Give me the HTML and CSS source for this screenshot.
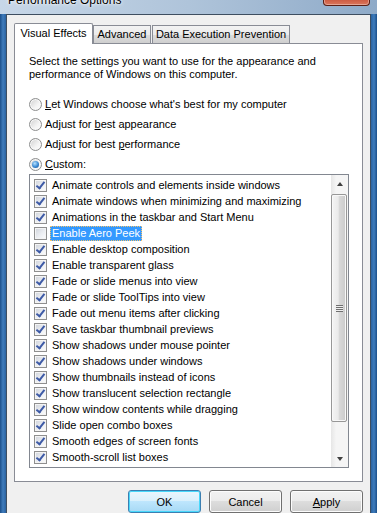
FILE: index.html
```html
<!DOCTYPE html>
<html lang="en">

<head>
  <meta charset="UTF-8">
  <title>Performance Options</title>
  <link rel="stylesheet" href="styles.css">
</head>

<body>
  <div class="window">
    <div class="titlebar">
      <span class="title">Performance Options</span>
      <span class="close">
        <svg width="12" height="6" viewBox="0 0 12 6">
          <path d="M2 -4 L6 0 L10 -4 M2 4 L6 0 L10 4" stroke="#fff" stroke-width="2.2" fill="none" />
        </svg>
      </span>
    </div>

    <div class="client">
      <div class="tabs">
        <div class="tab active">Visual Effects</div>
        <div class="tab adv">Advanced</div>
        <div class="tab dep">Data Execution Prevention</div>
      </div>

      <div class="panel">
        <p class="desc">Select the settings you want to use for the appearance and<br>performance of Windows on this computer.</p>

        <div class="radios">
          <div class="opt"><span class="radio"></span><span><u>L</u>et Windows choose what's best for my computer</span></div>
          <div class="opt"><span class="radio"></span><span>Adjust for <u>b</u>est appearance</span></div>
          <div class="opt"><span class="radio"></span><span>Adjust for best <u>p</u>erformance</span></div>
          <div class="opt"><span class="radio on"></span><span><u>C</u>ustom:</span></div>
        </div>

        <div class="listbox">
          <ul class="items">
            <li><span class="cb on"></span><span class="lbl">Animate controls and elements inside windows</span></li>
            <li><span class="cb on"></span><span class="lbl">Animate windows when minimizing and maximizing</span></li>
            <li><span class="cb on"></span><span class="lbl">Animations in the taskbar and Start Menu</span></li>
            <li><span class="cb"></span><span class="lbl selected">Enable Aero Peek</span></li>
            <li><span class="cb on"></span><span class="lbl">Enable desktop composition</span></li>
            <li><span class="cb on"></span><span class="lbl">Enable transparent glass</span></li>
            <li><span class="cb on"></span><span class="lbl">Fade or slide menus into view</span></li>
            <li><span class="cb on"></span><span class="lbl">Fade or slide ToolTips into view</span></li>
            <li><span class="cb on"></span><span class="lbl">Fade out menu items after clicking</span></li>
            <li><span class="cb on"></span><span class="lbl">Save taskbar thumbnail previews</span></li>
            <li><span class="cb on"></span><span class="lbl">Show shadows under mouse pointer</span></li>
            <li><span class="cb on"></span><span class="lbl">Show shadows under windows</span></li>
            <li><span class="cb on"></span><span class="lbl">Show thumbnails instead of icons</span></li>
            <li><span class="cb on"></span><span class="lbl">Show translucent selection rectangle</span></li>
            <li><span class="cb on"></span><span class="lbl">Show window contents while dragging</span></li>
            <li><span class="cb on"></span><span class="lbl">Slide open combo boxes</span></li>
            <li><span class="cb on"></span><span class="lbl">Smooth edges of screen fonts</span></li>
            <li><span class="cb on"></span><span class="lbl">Smooth-scroll list boxes</span></li>
          </ul>

          <div class="scrollbar">
            <div class="arrow up"></div>
            <div class="track">
              <div class="thumb"><span class="grip"></span></div>
            </div>
            <div class="arrow down"></div>
          </div>
        </div>
      </div>

      <div class="buttons">
        <button class="btn default">OK</button>
        <button class="btn">Cancel</button>
        <button class="btn"><u>A</u>pply</button>
      </div>
    </div>
  </div>
</body>

</html>
```

FILE: styles.css
```css
body {
  margin: 0;
  font-family: "Liberation Sans", Arial, sans-serif;
  font-size: 11px;
  color: #000;
  overflow: hidden;
}

.window {
  width: 377px;
  height: 513px;
  overflow: hidden;
  display: flex;
  flex-direction: column;
  background:
    linear-gradient(to right, #1b4f8a, #3f7cbc 3px, #2a62a0 6px) left top / 6px 100% no-repeat,
    linear-gradient(to left, #1b4f8a, #3f7cbc 3px, #2a62a0 6px) right top / 6px 100% no-repeat,
    #2a62a0;
}

/* title bar, mostly cut off at the top */
.titlebar {
  height: 14px;
  flex-shrink: 0;
  display: flex;
  background: linear-gradient(to right, #c7d7e8, #afc4da 50%, #8eaac8);
}

.title {
  font-size: 12px;
  line-height: 12px;
  margin: -6px 0 0 8px;
  text-shadow: 0 0 4px #fff, 0 0 2px #fff;
}

.close {
  margin: -13px 7px 0 auto;
  width: 45px;
  height: 18px;
  border: 1px solid #5b1e14;
  border-top: 0;
  border-radius: 0 0 4px 4px;
  background: linear-gradient(#e9a897, #d06a52 45%, #c4482f 50%, #d9765c);
  box-shadow: inset 0 0 0 1px rgba(255, 255, 255, .35);
  display: flex;
  justify-content: center;
  align-items: flex-start;
}

.client {
  flex: 1;
  margin: 0 6px;
  border: 1px solid #3e4e60;
  border-bottom: 0;
  background: #f0f0f0;
  padding: 8px 7px 0;
}

/* tabs */
.tabs {
  display: flex;
  align-items: flex-end;
  height: 20px;
  position: relative;
  z-index: 1;
}

.tab {
  height: 18px;
  box-sizing: border-box;
  border: 1px solid #898c95;
  border-bottom: 0;
  line-height: 17px;
  text-align: center;
  background: linear-gradient(#f3f3f3, #ebebeb 50%, #dddddd 50%, #cfcfcf);
  white-space: nowrap;
}

.tab.active {
  width: 79px;
  height: 21px;
  margin-bottom: -1px;
  line-height: 19px;
  background: #fff;
  border-radius: 2px 2px 0 0;
}

.tab.adv {
  width: 58px;
}

.tab.dep {
  width: 138px;
  margin-left: 1px;
}

.panel {
  height: 439px;
  box-sizing: border-box;
  background: #fff;
  border: 1px solid #898c95;
  padding-left: 14px;
}

.desc {
  margin: 11px 0 0;
  line-height: 13px;
}

.radios {
  margin-top: 13px;
}

.opt {
  display: flex;
  align-items: center;
  gap: 3px;
  height: 20px;
}

.radio {
  width: 13px;
  height: 13px;
  box-sizing: border-box;
  border-radius: 50%;
  border: 1px solid #8e8f8f;
  background: linear-gradient(135deg, #cfcfcf, #f4f4f4 60%, #fff);
  box-shadow: inset 0 0 0 1px #f8f8f8;
  display: flex;
  align-items: center;
  justify-content: center;
}

.radio.on::after {
  content: "";
  width: 7px;
  height: 7px;
  border-radius: 50%;
  background: radial-gradient(circle at 40% 35%, #b6e2ff, #3a88d2 55%, #174c8c);
}

/* list with check boxes */
.listbox {
  width: 320px;
  height: 294px;
  box-sizing: border-box;
  border: 1px solid #828790;
  display: flex;
}

.items {
  flex: 1;
  list-style: none;
  margin: 0;
  padding: 2px 0 0 4px;
}

.items li {
  height: 16px;
  display: flex;
  align-items: center;
  white-space: nowrap;
}

.cb {
  width: 13px;
  height: 13px;
  box-sizing: border-box;
  border: 1px solid #8f8f8f;
  background: linear-gradient(135deg, #cfd3da, #eceef2 55%, #fdfdfd);
  box-shadow: inset 0 0 0 1px #f4f4f4;
  position: relative;
  flex-shrink: 0;
}

.cb.on::after {
  content: "";
  position: absolute;
  left: 3px;
  top: 0;
  width: 3px;
  height: 7px;
  border: solid #3d5aa6;
  border-width: 0 2px 2px 0;
  transform: rotate(38deg);
}

.lbl {
  margin-left: 3px;
  padding: 0 1px;
  line-height: 13px;
  border: 1px solid transparent;
}

.lbl.selected {
  background: #3399ff;
  color: #fff;
  border: 1px dotted #f5c26b;
}

.scrollbar {
  width: 17px;
  display: flex;
  flex-direction: column;
  background: linear-gradient(to right, #e6e6e6, #f5f5f5 30%, #f5f5f5);
}

.arrow {
  height: 17px;
  display: flex;
  align-items: center;
  justify-content: center;
}

.arrow.up::after,
.arrow.down::after {
  content: "";
  border-left: 3.5px solid transparent;
  border-right: 3.5px solid transparent;
}

.arrow.up::after {
  border-bottom: 4px solid #404040;
}

.arrow.down::after {
  border-top: 4px solid #404040;
}

.track {
  flex: 1;
  padding: 2px 1px 0 0;
}

.thumb {
  height: 228px;
  box-sizing: border-box;
  border: 1px solid #979797;
  border-radius: 2px;
  background: linear-gradient(to right, #f4f4f4, #eaeaea 45%, #d9d9d9 50%, #cbcbcb);
  box-shadow: inset 0 0 0 1px #f8f8f8;
  display: flex;
  align-items: center;
  justify-content: center;
}

.grip {
  width: 7px;
  height: 7px;
  background: repeating-linear-gradient(#6f6f6f 0 1px, #eeeeee 1px 2px);
}

/* dialog buttons */
.buttons {
  display: flex;
  justify-content: flex-end;
  gap: 8px;
  margin-top: 8px;
}

.btn {
  width: 73px;
  height: 23px;
  padding: 0;
  font: inherit;
  color: #000;
  border: 1px solid #707070;
  border-radius: 3px;
  background: linear-gradient(#f2f2f2, #ebebeb 50%, #dddddd 50%, #cfcfcf);
  box-shadow: inset 0 0 0 1px #fcfcfc;
}

.btn.default {
  border-color: #3c7fb1;
  background: linear-gradient(#eaf6fd, #d9f0fc 50%, #bee6fd 50%, #a7d9f5);
  box-shadow: inset 0 0 0 1px #48d8fb;
}
```
